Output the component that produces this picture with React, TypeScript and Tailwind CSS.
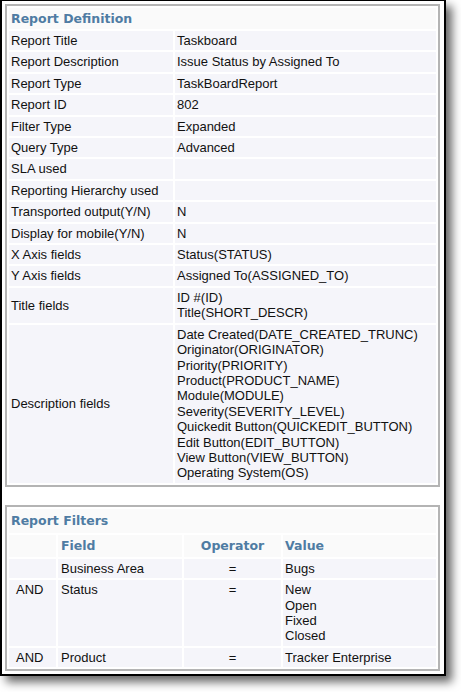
const DEFINITION: { label: string; value: string[] }[] = [
  { label: 'Report Title', value: ['Taskboard'] },
  { label: 'Report Description', value: ['Issue Status by Assigned To'] },
  { label: 'Report Type', value: ['TaskBoardReport'] },
  { label: 'Report ID', value: ['802'] },
  { label: 'Filter Type', value: ['Expanded'] },
  { label: 'Query Type', value: ['Advanced'] },
  { label: 'SLA used', value: [] },
  { label: 'Reporting Hierarchy used', value: [] },
  { label: 'Transported output(Y/N)', value: ['N'] },
  { label: 'Display for mobile(Y/N)', value: ['N'] },
  { label: 'X Axis fields', value: ['Status(STATUS)'] },
  { label: 'Y Axis fields', value: ['Assigned To(ASSIGNED_TO)'] },
  { label: 'Title fields', value: ['ID #(ID)', 'Title(SHORT_DESCR)'] },
  {
    label: 'Description fields',
    value: [
      'Date Created(DATE_CREATED_TRUNC)',
      'Originator(ORIGINATOR)',
      'Priority(PRIORITY)',
      'Product(PRODUCT_NAME)',
      'Module(MODULE)',
      'Severity(SEVERITY_LEVEL)',
      'Quickedit Button(QUICKEDIT_BUTTON)',
      'Edit Button(EDIT_BUTTON)',
      'View Button(VIEW_BUTTON)',
      'Operating System(OS)',
    ],
  },
];

const FILTERS: { join: string; field: string; op: string; values: string[] }[] = [
  { join: '', field: 'Business Area', op: '=', values: ['Bugs'] },
  { join: 'AND', field: 'Status', op: '=', values: ['New', 'Open', 'Fixed', 'Closed'] },
  { join: 'AND', field: 'Product', op: '=', values: ['Tracker Enterprise'] },
];

export default function App() {
  return (
    <div className="min-h-screen bg-white">
      <div className="w-[446px] border-2 border-t border-black bg-white pt-[3px] pb-[3px] pl-[3px] pr-[4px] shadow-[6px_6px_9px_rgba(0,0,0,0.6)] font-['Liberation_Sans',Arial,sans-serif] text-[13px] leading-[15.4px] text-[#111]">
        {/* definition panel */}
        <div className="border-2 border-[#b4b4b4] bg-white">
          <table className="w-full border-separate border-spacing-[2px] table-fixed">
            <colgroup>
              <col className="w-[164px]" />
              <col />
            </colgroup>
            <tbody>
              <tr>
                <td
                  colSpan={2}
                  className="h-[21px] bg-[#fafafa] pl-[2px] pt-[1px] font-['DejaVu_Sans',Verdana,sans-serif] text-[12.5px] font-bold text-[#4f7ca3]"
                >
                  Report Definition
                </td>
              </tr>
              {DEFINITION.map((row) => (
                <tr key={row.label}>
                  <td className="bg-[#f5f5fa] py-[2px] pl-[2px] align-middle">{row.label}</td>
                  <td className="bg-[#f5f5fa] py-[2px] pl-[2px] align-middle">
                    {row.value.length === 0 ? <span>&nbsp;</span> : row.value.map((v) => <div key={v}>{v}</div>)}
                  </td>
                </tr>
              ))}
            </tbody>
          </table>
        </div>

        {/* filters panel */}
        <div className="mt-[18px] border-2 border-[#b4b4b4] bg-white">
          <table className="w-full border-separate border-spacing-[2px] table-fixed">
            <colgroup>
              <col className="w-[47px]" />
              <col className="w-[124px]" />
              <col className="w-[97px]" />
              <col />
            </colgroup>
            <tbody>
              <tr>
                <td
                  colSpan={4}
                  className="h-[24px] bg-[#fafafa] pl-[2px] font-['DejaVu_Sans',Verdana,sans-serif] text-[12.5px] font-bold text-[#4f7ca3]"
                >
                  Report Filters
                </td>
              </tr>
              <tr className="font-['DejaVu_Sans',Verdana,sans-serif] text-[12.5px] font-bold text-[#4f7ca3]">
                <td className="h-[22px] bg-[#fafafa]"></td>
                <td className="h-[22px] bg-[#fafafa] pl-[3px]">Field</td>
                <td className="h-[22px] bg-[#fafafa] text-center">Operator</td>
                <td className="h-[22px] bg-[#fafafa] pl-[2px]">Value</td>
              </tr>
              {FILTERS.map((f) => (
                <tr key={f.field}>
                  <td className="bg-[#f5f5fa] py-[2px] pl-[7px] align-top">{f.join}</td>
                  <td className="bg-[#f5f5fa] py-[2px] pl-[3px] align-top">{f.field}</td>
                  <td className="bg-[#f5f5fa] py-[2px] text-center align-top">{f.op}</td>
                  <td className="bg-[#f5f5fa] py-[2px] pl-[2px] align-top">
                    {f.values.map((v) => (
                      <div key={v}>{v}</div>
                    ))}
                  </td>
                </tr>
              ))}
            </tbody>
          </table>
        </div>
      </div>
    </div>
  );
}
